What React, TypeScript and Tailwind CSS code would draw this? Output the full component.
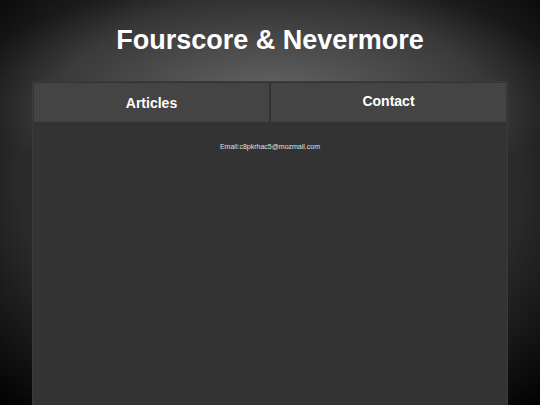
export default function App() {
  return (
    <div
      className="min-h-screen h-[405px] overflow-hidden flex flex-col items-center bg-[radial-gradient(ellipse_300px_110px_at_50%_92px,rgba(255,255,255,0.26),rgba(255,255,255,0)),radial-gradient(ellipse_75%_75%_at_50%_45%,#2f2f2f_0%,#2a2a2a_62%,#000_100%)]"
      style={{ fontFamily: '"Liberation Sans", Arial, sans-serif' }}
    >
      <h1 className="pt-[23px] h-[81px] text-[27px] leading-[34px] font-bold text-white">
        Fourscore &amp; Nevermore
      </h1>

      <div className="w-[476px] flex-1 bg-[#333] border border-[#3c3c3c] border-b-0 p-[1px]">
        <nav className="grid grid-cols-2 gap-[2px]">
          <a className="h-[39px] flex items-center justify-center pt-[2px] bg-[#444] text-white font-bold text-[14px]">
            Articles
          </a>
          <a className="h-[39px] flex items-center justify-center pb-[2px] bg-[#444] text-white font-bold text-[14px]">
            Contact
          </a>
        </nav>
        <p className="mt-[20px] text-center text-[7px] text-[#e0e0e0]">
          Email:c8pkrhac5@mozmail.com
        </p>
      </div>
    </div>
  );
}
